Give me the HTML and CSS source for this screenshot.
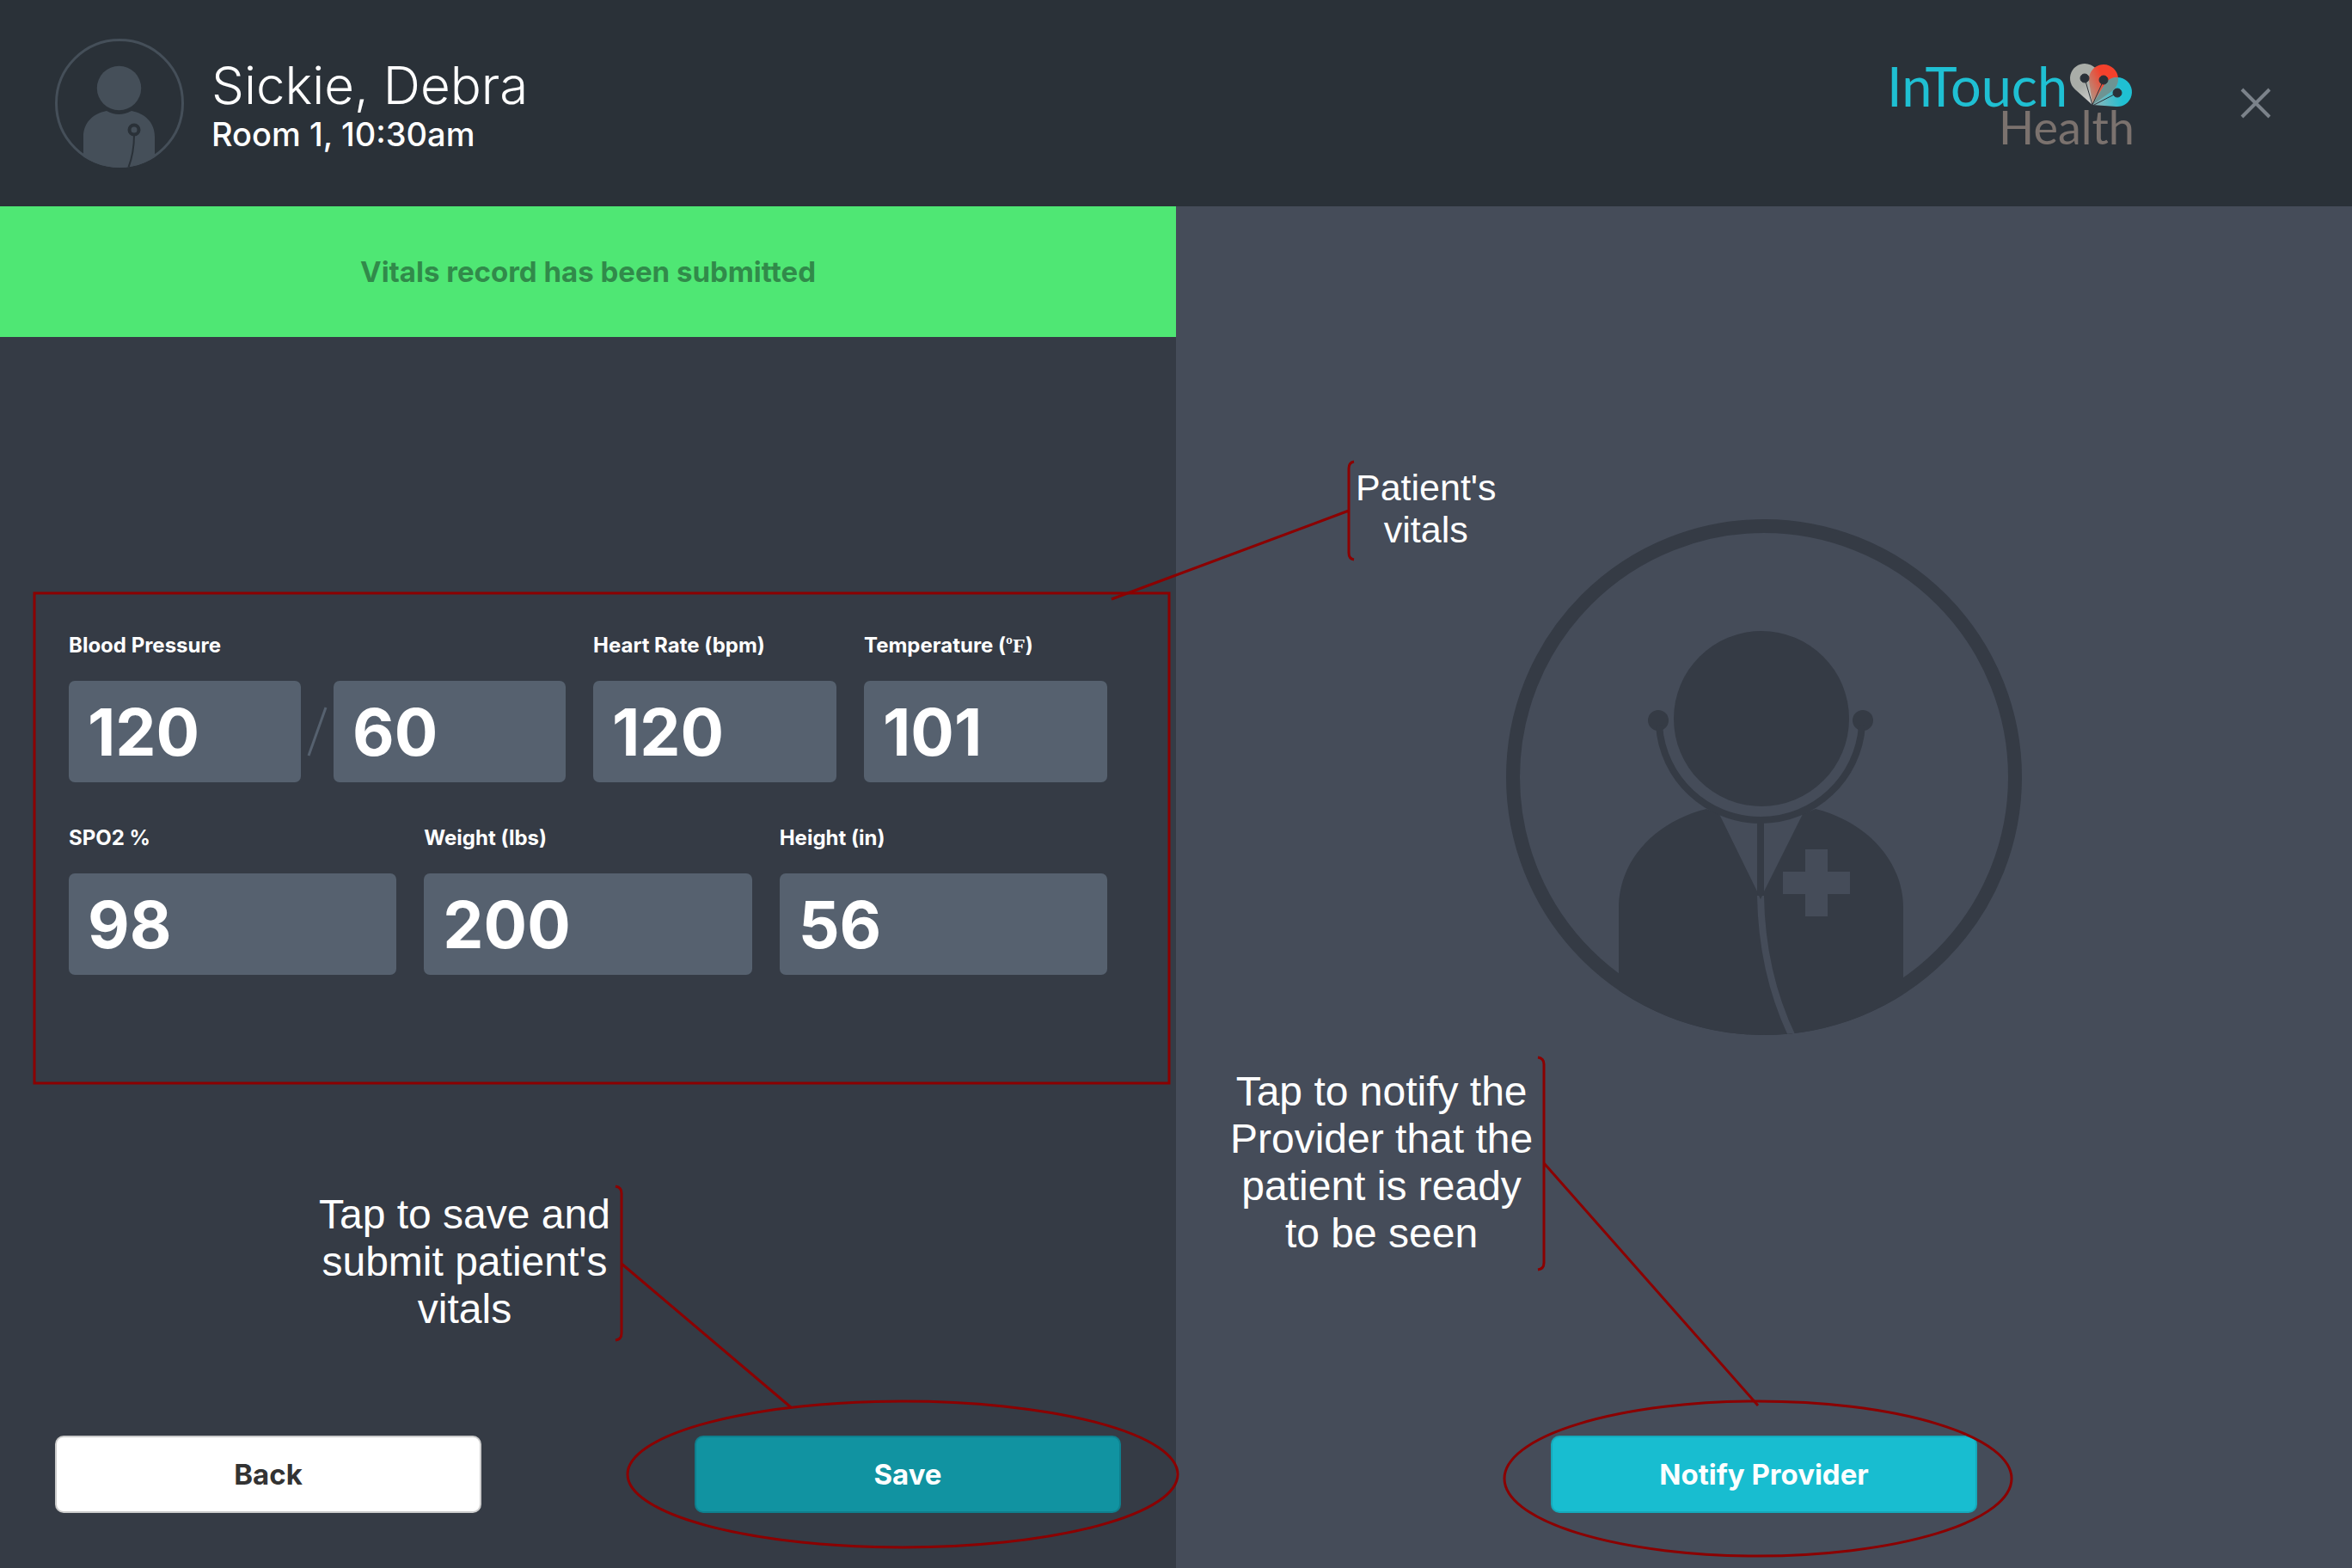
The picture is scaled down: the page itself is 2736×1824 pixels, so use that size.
FILE: index.html
```html
<!DOCTYPE html>
<html lang="en">
<head>
<meta charset="utf-8">
<title>Sickie, Debra - Vitals</title>
<link rel="stylesheet" href="styles.css">
</head>
<body>
<header class="topbar">
  <svg class="avatar" viewBox="0 0 150 150" aria-hidden="true">
    <defs><clipPath id="avatar-clip"><circle cx="75" cy="75" r="75"/></clipPath></defs>
    <circle class="avatar-ring" cx="75" cy="75" r="73.5"/>
    <circle class="avatar-fill" cx="74.500" cy="57.500" r="25.700"/>
    <g clip-path="url(#avatar-clip)">
      <path class="avatar-fill" d="M33 150V114C33 98 44 87 60 84Q74 92 89 84C105 87 116 98 116 114V150Z"/>
      <circle class="avatar-cut" cx="92" cy="106" r="5.500"/>
      <path class="avatar-cord" d="M92 112C92 126 90 138 85 151"/>
    </g>
  </svg>
  <div class="patient">
    <h1 class="patient-name">Sickie, Debra</h1>
    <p class="patient-visit">Room 1, 10:30am</p>
  </div>
  <svg class="logo" viewBox="0 0 284 100" role="img" aria-label="InTouch Health">
    <defs>
      <linearGradient id="petal-grey" x1="0.300" y1="0" x2="0.700" y2="1"><stop offset="0.500" stop-color="#a9ada8"/><stop offset="1" stop-color="#d2d2d0"/></linearGradient>
      <linearGradient id="petal-red" x1="0.800" y1="0.200" x2="0" y2="0.700"><stop offset="0.350" stop-color="#f4412c"/><stop offset="1" stop-color="#b5907f"/></linearGradient>
      <linearGradient id="petal-teal" x1="1" y1="0.500" x2="0" y2="0.600"><stop offset="0.250" stop-color="#1fc0d3"/><stop offset="1" stop-color="#93b5b8"/></linearGradient>
      <clipPath id="petal-overlap"><path d="M234 52L230.200 24.400A17 17 0 1 1 256.800 35.900Z"/></clipPath>
    </defs>
    <text class="logo-touch" x="-5" y="54">InTouch</text>
    <text class="logo-health" x="125" y="98">Health</text>
    <path fill="url(#petal-grey)" d="M234 52L213.600 33.700A17 17 0 1 1 241.400 25.600Z"/>
    <path fill="url(#petal-red)" d="M234 52L230.200 24.400A17 17 0 1 1 256.800 35.900Z"/>
    <path fill="url(#petal-teal)" d="M234 52L248.500 28.100A17 17 0 1 1 261.800 54Z"/>
    <path fill="#6d9493" clip-path="url(#petal-overlap)" d="M234 52L248.500 28.100A17 17 0 1 1 261.800 54Z"/>
    <g class="logo-pins">
      <path d="M225 21L234 52M247 23L234 52M263 38L234 53"/>
      <circle cx="225" cy="21" r="5"/><circle cx="247" cy="23" r="5"/><circle cx="263" cy="38" r="5"/>
    </g>
  </svg>
  <button class="close" type="button" aria-label="Close">
    <svg class="close-icon" viewBox="0 0 36 36" aria-hidden="true"><path d="M2 2L34 34M34 2L2 34"/></svg>
  </button>
</header>

<main class="panels">
  <section class="vitals">
    <p class="banner" role="status">Vitals record has been submitted</p>
    <form class="vitals-form" id="vitals-form">
      <div class="row row-top">
        <div class="field">
          <label class="label" for="systolic">Blood Pressure</label>
          <div class="pressure">
            <input class="value" id="systolic" type="text" value="120">
            <svg class="slash" viewBox="0 0 38 60" aria-hidden="true"><path d="M9 58L29 2"/></svg>
            <input class="value" id="diastolic" type="text" value="60" aria-label="Diastolic">
          </div>
        </div>
        <div class="field">
          <label class="label" for="heart">Heart Rate (bpm)</label>
          <input class="value" id="heart" type="text" value="120">
        </div>
        <div class="field">
          <label class="label" for="temperature">Temperature (<span class="unit">ºF</span>)</label>
          <input class="value" id="temperature" type="text" value="101">
        </div>
      </div>
      <div class="row row-bottom">
        <div class="field">
          <label class="label" for="spo2">SPO2 %</label>
          <input class="value" id="spo2" type="text" value="98">
        </div>
        <div class="field">
          <label class="label" for="weight">Weight (lbs)</label>
          <input class="value" id="weight" type="text" value="200">
        </div>
        <div class="field">
          <label class="label" for="height">Height (in)</label>
          <input class="value" id="height" type="text" value="56">
        </div>
      </div>
    </form>
    <div class="actions">
      <button class="button button-back" type="button">Back</button>
      <button class="button button-save" type="submit" form="vitals-form">Save</button>
    </div>
  </section>

  <section class="provider">
    <svg class="doctor" viewBox="0 0 600 600" aria-hidden="true">
      <defs><clipPath id="doctor-clip"><circle cx="300" cy="300" r="300"/></clipPath></defs>
      <circle class="doctor-line" cx="300" cy="300" r="292" stroke-width="16"/>
      <g clip-path="url(#doctor-clip)">
        <path class="doctor-fill" d="M131 600V452C131 398 172 352 233 337L248 343L296 441L345 343L360 337C420 352 462 398 462 452V600Z"/>
        <path class="doctor-cut" d="M296 438C297 500 309 552 333 602"/>
      </g>
      <circle class="doctor-fill" cx="297" cy="232" r="102"/>
      <circle class="doctor-fill" cx="177" cy="234" r="12"/>
      <circle class="doctor-fill" cx="415" cy="234" r="12"/>
      <path class="doctor-line" stroke-width="8" d="M178 240C182 301 233 350 296 350S410 301 414 240"/>
      <path class="doctor-fill" d="M292 350H300V434L296 442L292 434Z"/>
      <path class="doctor-cross" d="M348 384H374V410H400V436H374V462H348V436H322V410H348Z"/>
    </svg>
    <button class="button button-notify" type="button">Notify Provider</button>
  </section>
</main>

<aside class="notes">
  <svg class="note-lines" viewBox="0 0 2736 1824" aria-hidden="true">
    <rect x="40" y="690" width="1320" height="570"/>
    <path d="M1575 537Q1569 538 1569 545V643Q1569 650 1575 651M1569 594L1293 697"/>
    <path d="M716 1380Q723 1381 723 1388V1551Q723 1558 716 1559M723 1470L920 1637"/>
    <path d="M1789 1230Q1796 1231 1796 1238V1469Q1796 1476 1789 1477M1796 1353L2045 1635"/>
    <ellipse cx="1050" cy="1715" rx="320" ry="85"/>
    <ellipse cx="2045" cy="1720" rx="295" ry="90"/>
  </svg>
  <p class="note note-vitals">Patient's<br>vitals</p>
  <p class="note note-save">Tap to save and<br>submit patient's<br>vitals</p>
  <p class="note note-notify">Tap to notify the<br>Provider that the<br>patient is ready<br>to be seen</p>
</aside>
</body>
</html>
```

FILE: styles.css
```css
* {
  box-sizing: border-box;
}

body {
  position: relative;
  display: flex;
  flex-direction: column;
  min-height: 100vh;
  margin: 0;
  background: #454c59;
  color: #fff;
  font-family: Inter, "Liberation Sans", sans-serif;
}

h1,
p {
  margin: 0;
}

/* Top bar */

.topbar {
  display: flex;
  align-items: center;
  height: 240px;
  padding: 0 88px 0 64px;
  background: #2a3138;
}

.avatar {
  width: 150px;
  height: 150px;
}

.avatar-ring {
  fill: none;
  stroke: #454f59;
  stroke-width: 3;
}

.avatar-fill {
  fill: #454f59;
}

.avatar-cut {
  fill: none;
  stroke: #2a3138;
  stroke-width: 4;
}

.avatar-cord {
  fill: none;
  stroke: #2a3138;
  stroke-width: 2;
}

.patient {
  flex: 1;
  padding: 8px 0 0 32px;
}

.patient-name {
  font-size: 60px;
  font-weight: 300;
  line-height: 64px;
}

.patient-visit {
  font-size: 38px;
  font-weight: 500;
  line-height: 50px;
}

.logo {
  width: 284px;
  height: 100px;
  margin-right: 116px;
  overflow: visible;
}

.logo-touch,
.logo-health {
  font-family: Lato, sans-serif;
}

.logo-touch {
  fill: #1fc0d3;
  font-size: 63px;
}

.logo-health {
  fill: #7b726e;
  font-size: 54px;
}

.logo-pins {
  fill: #2a3138;
  stroke: #2a3138;
  stroke-width: 1;
}

.close {
  display: flex;
  padding: 6px;
  border: 0;
  background: none;
}

.close-icon {
  width: 36px;
  height: 36px;
  fill: none;
  stroke: #7b828a;
  stroke-width: 4;
}

/* Panels */

.panels {
  display: grid;
  flex: 1;
  grid-template-columns: 1fr 1fr;
}

.vitals,
.provider {
  display: flex;
  flex-direction: column;
  padding-bottom: 64px;
}

.vitals {
  background: #353b45;
}

.banner {
  background: #4fe774;
  color: #318a4a;
  font-size: 33px;
  font-weight: 700;
  line-height: 152px;
  text-align: center;
}

.vitals-form {
  display: grid;
  gap: 50px;
  padding: 344px 80px 64px;
}

.row {
  display: grid;
  gap: 32px;
}

.row-top {
  grid-template-columns: 578fr 283fr 283fr;
}

.row-bottom {
  grid-template-columns: 1fr 1fr 1fr;
}

.field {
  display: grid;
  gap: 26px;
}

.label {
  height: 30px;
  font-size: 24px;
  font-weight: 700;
  line-height: 30px;
}

.unit {
  font-family: "Liberation Serif", serif;
  line-height: 1;
}

.pressure {
  display: flex;
  align-items: center;
}

.slash {
  flex: none;
  width: 38px;
  height: 60px;
  fill: none;
  stroke: #56616f;
  stroke-width: 3;
}

.value {
  width: 100%;
  min-width: 0;
  height: 118px;
  padding: 0 22px;
  border: 0;
  border-radius: 7px;
  background: #56616f;
  color: #fff;
  font-family: inherit;
  font-size: 75px;
  font-weight: 700;
}

.actions {
  display: flex;
  justify-content: space-between;
  margin-top: auto;
  padding: 0 64px;
}

.button {
  width: 496px;
  height: 90px;
  border: 2px solid;
  border-radius: 10px;
  color: #fff;
  font-family: inherit;
  font-size: 33px;
  font-weight: 700;
}

.button-back {
  border-color: #ccc;
  background: #fff;
  color: #333;
}

.button-save {
  border-color: #0f7f8d;
  background: #1193a1;
}

.button-notify {
  margin-top: auto;
  border-color: #15a9bb;
  background: #18bdd0;
}

.provider {
  align-items: center;
  padding-top: 364px;
}

.doctor {
  width: 600px;
  height: 600px;
}

.doctor-fill {
  fill: #353b45;
}

.doctor-line {
  fill: none;
  stroke: #353b45;
}

.doctor-cut {
  fill: none;
  stroke: #454c59;
  stroke-width: 8;
}

.doctor-cross {
  fill: #454c59;
}

/* Callouts drawn over the screen */

.notes {
  position: absolute;
  inset: 0;
  pointer-events: none;
}

.note-lines {
  display: block;
  width: 100%;
  fill: none;
  stroke: #8b0000;
  stroke-width: 3;
}

.note {
  position: absolute;
  font-family: "Liberation Sans", Arial, sans-serif;
  font-size: 48px;
  line-height: 55px;
  text-align: center;
  white-space: nowrap;
}

.note-vitals {
  top: 543px;
  left: 1577px;
  font-size: 43px;
  line-height: 49px;
}

.note-save {
  top: 1385px;
  left: 371px;
}

.note-notify {
  top: 1242px;
  left: 1431px;
}
```
